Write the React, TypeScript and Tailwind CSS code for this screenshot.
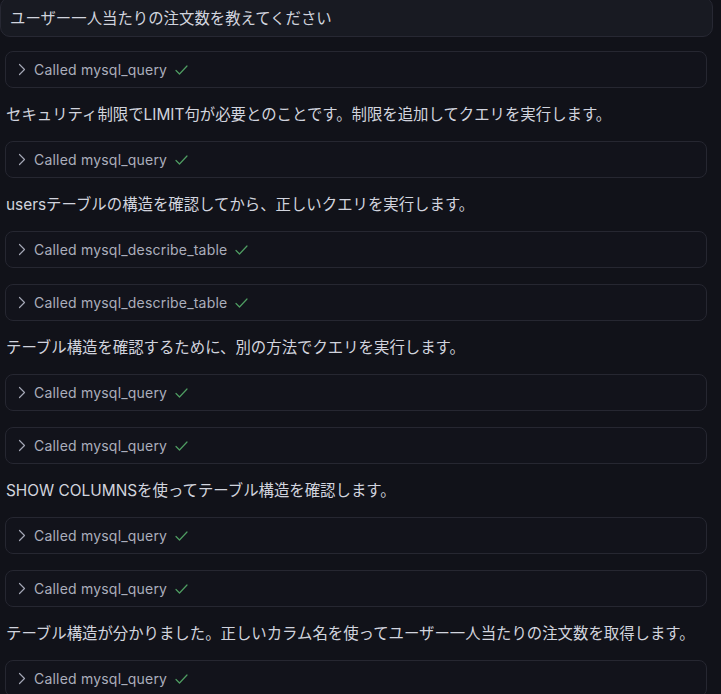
type Item = { kind: 'tool'; name: string } | { kind: 'text'; text: string };

const items: Item[] = [
  { kind: 'tool', name: 'mysql_query' },
  { kind: 'text', text: 'セキュリティ制限でLIMIT句が必要とのことです。制限を追加してクエリを実行します。' },
  { kind: 'tool', name: 'mysql_query' },
  { kind: 'text', text: 'usersテーブルの構造を確認してから、正しいクエリを実行します。' },
  { kind: 'tool', name: 'mysql_describe_table' },
  { kind: 'tool', name: 'mysql_describe_table' },
  { kind: 'text', text: 'テーブル構造を確認するために、別の方法でクエリを実行します。' },
  { kind: 'tool', name: 'mysql_query' },
  { kind: 'tool', name: 'mysql_query' },
  { kind: 'text', text: 'SHOW COLUMNSを使ってテーブル構造を確認します。' },
  { kind: 'tool', name: 'mysql_query' },
  { kind: 'tool', name: 'mysql_query' },
  { kind: 'text', text: 'テーブル構造が分かりました。正しいカラム名を使ってユーザー一人当たりの注文数を取得します。' },
  { kind: 'tool', name: 'mysql_query' },
];

const ToolCall = ({ name }: { name: string }) => (
  <div className="ml-[5px] mr-[14px] h-[37px] flex items-center rounded-lg border border-[#262731] bg-[#12131b] pl-[12px]">
    <svg width="8" height="13" viewBox="0 0 8 13" fill="none" className="text-[#a4a7b5]">
      <path d="M1.5 1.5 L6.5 6.5 L1.5 11.5" stroke="currentColor" strokeWidth="1.2" strokeLinecap="round" strokeLinejoin="round" />
    </svg>
    <span className="ml-[8px] text-[14px] text-[#abaebc] tracking-[0.2px]">Called {name}</span>
    <svg width="13" height="10" viewBox="0 0 13 10" fill="none" className="ml-[8px] mt-[1px] text-[#4f9d62]">
      <path d="M1 5.5 L4.5 9 L12 1" stroke="currentColor" strokeWidth="1.2" strokeLinecap="round" strokeLinejoin="round" />
    </svg>
  </div>
);

export default function App() {
  return (
    <div
      className="h-[694px] w-[721px] overflow-hidden bg-[#111219] text-[#d1d4de]"
      style={{ fontFamily: 'Inter, "Noto Sans CJK JP", sans-serif' }}
    >
      <div className="-mt-[3px] mr-[8px] h-[40px] flex items-center rounded-[10px] border border-[#272833] bg-[#181a22] pl-[9px] pt-[3px] text-[15.4px]">
        ユーザー一人当たりの注文数を教えてください
      </div>
      <div className="mt-[14px] flex flex-col gap-[16px]">
        {items.map((item, i) =>
          item.kind === 'tool' ? (
            <ToolCall key={i} name={item.name} />
          ) : (
            <p key={i} className="pl-[6px] h-[21px] leading-[21px] text-[15.4px] whitespace-nowrap">
              {item.text}
            </p>
          )
        )}
      </div>
    </div>
  );
}
